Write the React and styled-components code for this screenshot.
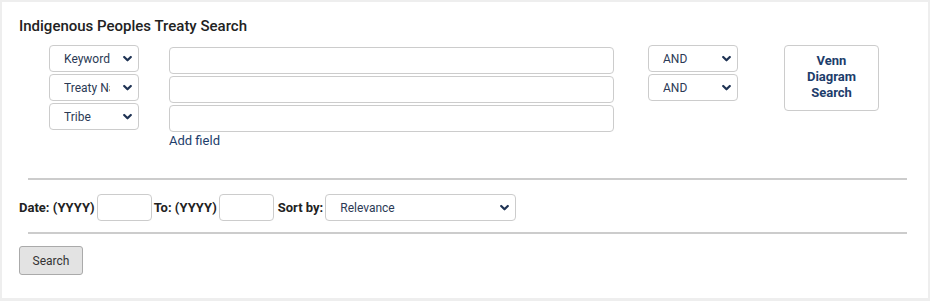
import React from "react";
import styled, { createGlobalStyle } from "styled-components";

const Global = createGlobalStyle`
  html, body { margin: 0; padding: 0; background: #eeeeee; }
  body { font-family: Roboto, "Liberation Sans", Arial, sans-serif; }
  * { box-sizing: border-box; }
`;

const Panel = styled.div`
  margin: 2px;
  width: 926px;
  height: 296px;
  background: #fff;
  padding: 14px 21px 0 17px;
`;

const Title = styled.h2`
  margin: 0;
  font-size: 15px;
  font-weight: 500;
  line-height: 20px;
  color: #222;
`;

const Fields = styled.div`
  display: flex;
  align-items: flex-start;
  margin-top: 9px;
  padding-left: 30px;
`;

const Column = styled.div`
  display: flex;
  flex-direction: column;
  gap: 2px;
  margin-top: ${(p) => p.$top || 0}px;
  margin-left: ${(p) => p.$left || 0}px;
`;

const SelectWrap = styled.div`
  position: relative;
  width: ${(p) => p.$w}px;
  height: 27px;
`;

const Select = styled.select`
  appearance: none;
  -webkit-appearance: none;
  width: 100%;
  height: 100%;
  border: 1px solid #cccccc;
  border-radius: 4px;
  background: #fff;
  padding: 0 ${(p) => p.$pr || 28}px 0 14px;
  font-family: Roboto, "Liberation Sans", Arial, sans-serif;
  font-size: 12px;
  color: #2b3a55;
  outline: none;
`;

const Chevron = styled.svg`
  position: absolute;
  right: 7px;
  top: 50%;
  transform: translateY(-50%);
  pointer-events: none;
`;

const TextInput = styled.input`
  width: ${(p) => p.$w}px;
  height: 27px;
  border: 1px solid #cccccc;
  border-radius: 4px;
  background: #fff;
  outline: none;
  padding: 0 6px;
`;

const AddField = styled.a`
  font-size: 13px;
  line-height: 14px;
  color: #1d3d6b;
  text-decoration: none;
  margin-top: 0;
`;

const VennButton = styled.button`
  margin-left: 46px;
  width: 95px;
  height: 66px;
  border: 1px solid #cccccc;
  border-radius: 4px;
  background: #fff;
  font-family: Roboto, "Liberation Sans", Arial, sans-serif;
  font-size: 13px;
  font-weight: 700;
  line-height: 16px;
  color: #1d3d6b;
  padding: 0 8px 2px;
`;

const Rule = styled.hr`
  border: 0;
  border-top: 2px solid #cccccc;
  margin: ${(p) => p.$mt}px 0 0 9px;
  height: 0;
`;

const FilterRow = styled.div`
  display: flex;
  align-items: center;
  margin-top: 14px;
  gap: 2px;
`;

const Label = styled.label`
  font-size: 13px;
  font-weight: 700;
  color: #222;
  margin-left: ${(p) => p.$ml || 0}px;
`;

const SearchButton = styled.button`
  margin-top: 12px;
  width: 64px;
  height: 29px;
  border: 1px solid #aaaaaa;
  border-radius: 3px;
  background: #e3e3e3;
  font-family: Roboto, "Liberation Sans", Arial, sans-serif;
  font-size: 12px;
  color: #333;
  padding: 0;
`;

const ChevronIcon = () => (
  <Chevron width="9" height="7" viewBox="0 0 9 7">
    <polyline
      points="1.2,1.5 4.5,4.8 7.8,1.5"
      fill="none"
      stroke="#1f3354"
      strokeWidth="2.2"
      strokeLinecap="round"
      strokeLinejoin="round"
    />
  </Chevron>
);

const Dropdown = ({ w, value, options, pr }) => (
  <SelectWrap $w={w}>
    <Select $pr={pr} defaultValue={value}>
      {options.map((o) => (
        <option key={o}>{o}</option>
      ))}
    </Select>
    <ChevronIcon />
  </SelectWrap>
);

const fieldOpts = ["Keyword", "Treaty Name", "Tribe"];

export default function App() {
  return (
    <>
      <Global />
      <Panel>
        <Title>Indigenous Peoples Treaty Search</Title>
        <Fields>
          <Column>
            <Dropdown w={90} value="Keyword" options={fieldOpts} />
            <Dropdown w={90} value="Treaty Name" options={fieldOpts} />
            <Dropdown w={90} value="Tribe" options={fieldOpts} />
          </Column>
          <Column $top={2} $left={30}>
            <TextInput $w={445} />
            <TextInput $w={445} />
            <TextInput $w={445} />
            <AddField href="#">Add field</AddField>
          </Column>
          <Column $left={34}>
            <Dropdown w={90} value="AND" options={["AND", "OR", "NOT"]} />
            <Dropdown w={90} value="AND" options={["AND", "OR", "NOT"]} />
          </Column>
          <VennButton>Venn Diagram Search</VennButton>
        </Fields>
        <Rule $mt={30} />
        <FilterRow>
          <Label>Date: (YYYY)</Label>
          <TextInput $w={55} />
          <Label>To: (YYYY)</Label>
          <TextInput $w={55} />
          <Label $ml={2}>Sort by:</Label>
          <Dropdown w={191} value="Relevance" options={["Relevance", "Date"]} />
        </FilterRow>
        <Rule $mt={11} />
        <SearchButton>Search</SearchButton>
      </Panel>
    </>
  );
}
